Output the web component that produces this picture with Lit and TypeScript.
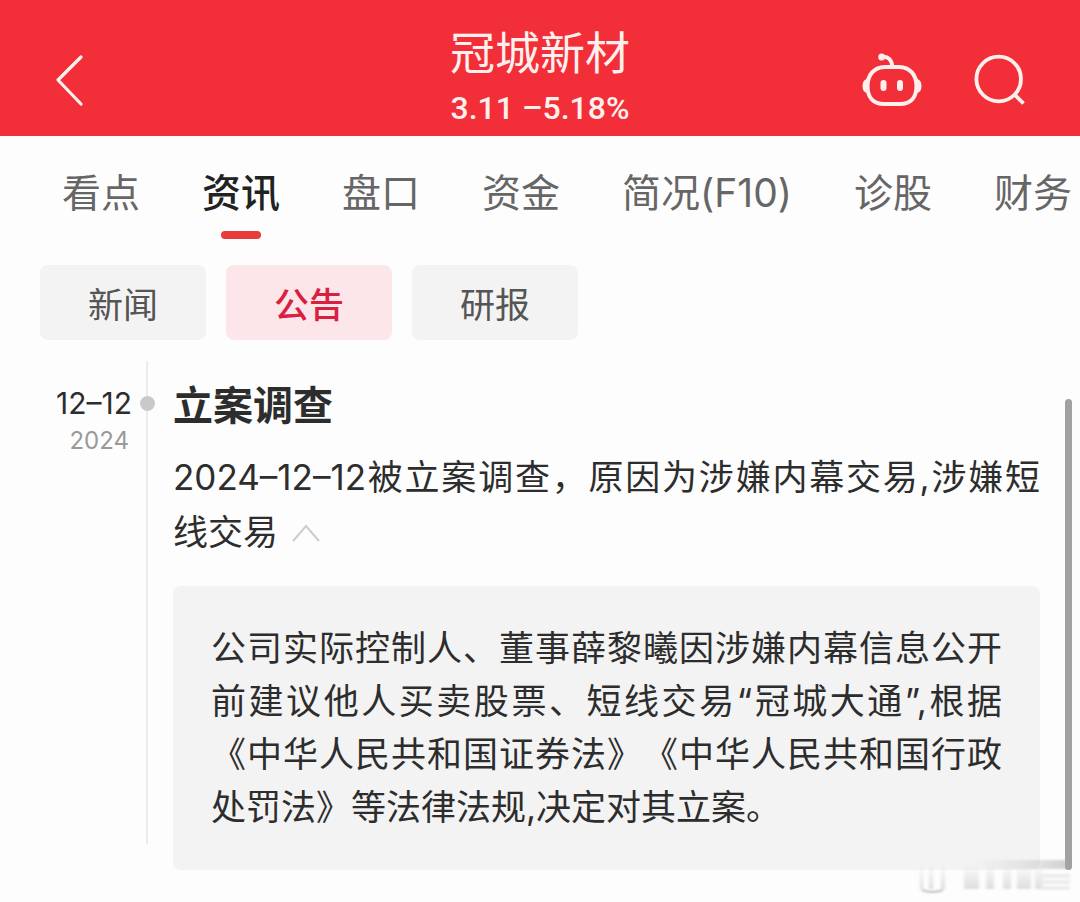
import { LitElement, html, css, svg } from "lit";
import { customElement, state } from "lit/decorators.js";
import { classMap } from "lit/directives/class-map.js";

@customElement("app-root")
export class AppRoot extends LitElement {
  @state() private tab = "资讯";
  @state() private category = "公告";
  @state() private expanded = true;

  private tabs = ["看点", "资讯", "盘口", "资金", "简况(F10)", "诊股", "财务"];
  private categories = ["新闻", "公告", "研报"];

  static styles = css`
    :host {
      display: block;
      position: relative;
      min-height: 100vh;
      overflow: hidden;
      background: #fdfdfd;
      color: #2d2d2d;
      font-family: Inter, "Noto Sans CJK SC", sans-serif;
      text-spacing-trim: space-all;
    }
    * {
      box-sizing: border-box;
    }
    button {
      margin: 0;
      padding: 0;
      border: 0;
      background: none;
      color: inherit;
      font: inherit;
      cursor: pointer;
    }
    svg {
      display: block;
    }
    h1,
    h2,
    p {
      margin: 0;
      font-weight: 400;
    }
    .top {
      display: grid;
      grid-template-columns: 1fr auto 1fr;
      align-items: start;
      height: 136px;
      padding: 23px 48px 0;
      background: #f22f38;
      color: #fff0ee;
    }
    .back {
      justify-self: start;
      padding-top: 29px;
    }
    .stock {
      text-align: center;
    }
    .name {
      font-size: 45px;
      line-height: 62px;
    }
    .quote {
      font-family: Roboto, sans-serif;
      font-size: 32px;
      font-weight: 500;
      line-height: 46px;
    }
    .tools {
      display: flex;
      justify-self: end;
      gap: 46px;
      padding-top: 29px;
    }
    .tabs {
      display: flex;
      gap: 62px;
      padding: 29px 0 0 62px;
      overflow: hidden;
    }
    .tab {
      display: flex;
      flex: none;
      flex-direction: column;
      align-items: center;
      gap: 10px;
      color: #666;
      font-size: 39px;
      line-height: 56px;
      white-space: nowrap;
    }
    .tab::after {
      content: "";
      width: 40px;
      height: 8px;
      border-radius: 4px;
    }
    .tab.on {
      color: #222;
      font-weight: 500;
    }
    .tab.on::after {
      background: #e93d3a;
    }
    .chips {
      display: flex;
      gap: 20px;
      padding: 26px 40px 0;
    }
    .chip {
      width: 166px;
      height: 75px;
      border-radius: 8px;
      background: #f3f3f3;
      color: #555;
      font-size: 35px;
    }
    .chip.on {
      background: #fde6ea;
      color: #d9203f;
      font-weight: 500;
    }
    .event {
      display: grid;
      grid-template-columns: 132px 30px minmax(0, 1fr);
      padding: 21px 40px 32px 0;
    }
    .date {
      padding-top: 23px;
      text-align: right;
      font-size: 30px;
      line-height: 38px;
    }
    .year {
      display: block;
      padding-right: 3px;
      color: #999;
      font-size: 24px;
    }
    .rail {
      display: flex;
      justify-content: center;
      margin-bottom: 26px;
      padding-top: 35px;
      background: linear-gradient(#ececec, #ececec) 14px 0 / 2px 100% no-repeat;
    }
    .dot {
      width: 15px;
      height: 15px;
      border-radius: 50%;
      background: #c9c9c9;
    }
    .body {
      padding: 17px 0 0 11px;
    }
    .title {
      font-size: 40px;
      font-weight: 700;
      line-height: 56px;
    }
    .summary {
      padding-top: 16px;
      font-size: 35px;
      line-height: 55px;
      text-align: justify;
    }
    .toggle {
      padding: 0 14px;
      vertical-align: 3px;
      line-height: 1;
    }
    .detail {
      margin-top: 26px;
      padding: 36px 38px;
      border-radius: 8px;
      background: #f3f3f3;
      font-size: 35px;
      line-height: 53px;
      text-align: justify;
    }
    .thumb {
      position: absolute;
      top: 399px;
      right: 8px;
      bottom: 32px;
      width: 7px;
      border-radius: 4px;
      background: #a1a1a1;
    }
    .stamp {
      position: absolute;
      right: 8px;
      bottom: 8px;
    }
  `;

  private robotIcon = svg`
    <path d="M18 5C24 4 28 8 28 14" />
    <circle cx="17.700" cy="5" r="3.500" fill="currentColor" stroke="none" />
    <path d="M21 15H35C46 15 52.500 23 52.500 34C52.500 46 46 52 36 52H20C10 52 3.500 46 3.500 34C3.500 23 10 15 21 15Z" />
    <path d="M3 27Q-1.500 28 -1.500 34T3 41ZM53 27Q57.500 28 57.500 34T53 41Z" fill="currentColor" stroke="none" />
    <path d="M19.500 31V36M36 31V36" stroke-width="6" />
  `;

  render() {
    return html`
      <header class="top">
        <button class="back" aria-label="返回">
          <svg width="42" height="60" viewBox="0 0 42 60" fill="none" stroke="currentColor" stroke-width="3.200" stroke-linecap="round" stroke-linejoin="round">
            <path d="M33 5 10 28 33 52" />
          </svg>
        </button>
        <div class="stock">
          <h1 class="name">冠城新材</h1>
          <p class="quote">3.11 –5.18%</p>
        </div>
        <div class="tools">
          <button aria-label="智能助手">
            <svg width="66" height="60" viewBox="-4 0 66 60" fill="none" stroke="currentColor" stroke-width="4" stroke-linecap="round">
              ${this.robotIcon}
            </svg>
          </button>
          <button aria-label="搜索">
            <svg width="60" height="60" viewBox="0 0 60 60" fill="none" stroke="currentColor" stroke-width="3.800">
              <circle cx="26.700" cy="27" r="22.300" />
              <path d="M42 42 51.500 51.500" />
            </svg>
          </button>
        </div>
      </header>

      <nav class="tabs">
        ${this.tabs.map(
          (t) => html`<button
            class=${classMap({ tab: true, on: t === this.tab })}
            @click=${() => (this.tab = t)}
          >${t}</button>`
        )}
      </nav>

      <div class="chips">
        ${this.categories.map(
          (c) => html`<button
            class=${classMap({ chip: true, on: c === this.category })}
            @click=${() => (this.category = c)}
          >${c}</button>`
        )}
      </div>

      <article class="event">
        <time class="date" datetime="2024-12-12">12–12<span class="year">2024</span></time>
        <div class="rail"><span class="dot"></span></div>
        <div class="body">
          <h2 class="title">立案调查</h2>
          <p class="summary">2024–12–12被立案调查，原因为涉嫌内幕交易,涉嫌短线交易<button
              class="toggle"
              aria-label="展开或收起"
              aria-expanded=${this.expanded}
              @click=${() => (this.expanded = !this.expanded)}
            ><svg width="28" height="18" viewBox="0 0 28 18" fill="none" stroke="#ccc" stroke-width="2">
                <path d="M1 17 14 2 27 17" />
              </svg></button></p>
          ${this.expanded
            ? html`<p class="detail">公司实际控制人、董事薛黎曦因涉嫌内幕信息公开前建议他人买卖股票、短线交易“冠城大通”,根据《中华人民共和国证券法》《中华人民共和国行政处罚法》等法律法规,决定对其立案。</p>`
            : ""}
        </div>
      </article>

      <div class="thumb"></div>
      <svg class="stamp" width="160" height="40" viewBox="0 0 160 40" aria-hidden="true">
        <defs>
          <linearGradient id="fade" x1="0" x2="1">
            <stop offset="0" stop-color="#ccc" stop-opacity="0" />
            <stop offset="1" stop-color="#aaa" stop-opacity=".55" />
          </linearGradient>
          <linearGradient id="drop" x1="0" y1="0" x2="0" y2="1">
            <stop offset="0" stop-color="#e6e6e6" stop-opacity="0" />
            <stop offset="1" stop-color="#dcdcdc" />
          </linearGradient>
          <filter id="soft"><feGaussianBlur stdDeviation="1.800 1" /></filter>
        </defs>
        <g filter="url(#soft)">
          <rect x="60" y="6" width="96" height="9" fill="url(#fade)" />
          <rect x="8" y="6" width="3" height="29" fill="url(#drop)" />
          <rect x="17" y="6" width="4" height="29" fill="url(#drop)" />
          <rect x="29" y="6" width="4" height="29" fill="url(#drop)" />
          <path d="M10 36Q20 40 31 36" fill="none" stroke="#aaa" stroke-width="1.500" />
          <rect x="52" y="8" width="15" height="27" fill="url(#drop)" />
          <rect x="74" y="8" width="8" height="27" fill="url(#drop)" />
          <rect x="91" y="8" width="8" height="27" fill="url(#drop)" />
          <rect x="105" y="8" width="14" height="27" fill="url(#drop)" />
          <rect x="123" y="8" width="7" height="27" fill="url(#drop)" />
          <path d="M130 22H158M130 28H158M130 34H158" stroke="#ececec" stroke-width="4" />
        </g>
      </svg>
    `;
  }
}
